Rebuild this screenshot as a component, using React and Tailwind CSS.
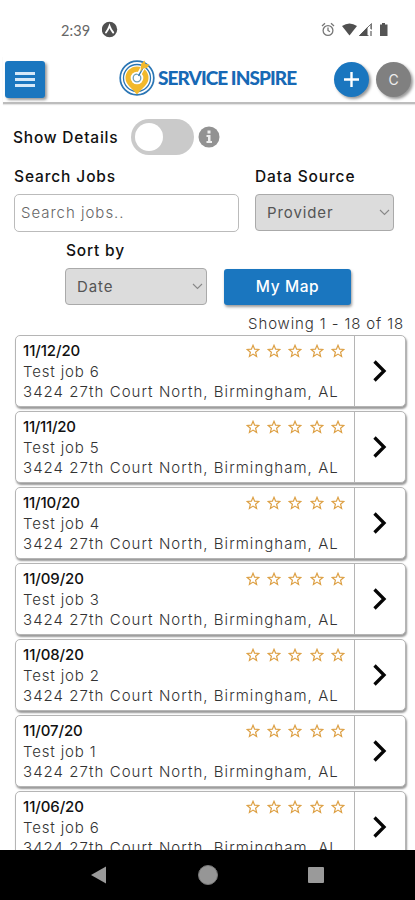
import React from "react";

const jobs = [
  { date: "11/12/20", tracking: "tracking-[-0.1px]", name: "Test job 6" },
  { date: "11/11/20", tracking: "tracking-[-0.3px]", name: "Test job 5" },
  { date: "11/10/20", tracking: "tracking-[-0.2px]", name: "Test job 4" },
  { date: "11/09/20", tracking: "tracking-[-0.1px]", name: "Test job 3" },
  { date: "11/08/20", tracking: "tracking-[-0.1px]", name: "Test job 2" },
  { date: "11/07/20", tracking: "tracking-[-0.1px]", name: "Test job 1" },
  { date: "11/06/20", tracking: "tracking-[-0.1px]", name: "Test job 6" },
];

function StatusBar() {
  return (
    <div className="flex h-[56px] shrink-0 items-start pt-[20px] pl-[61px] pr-[27px] text-[#555]">
      <span className="w-[41px] font-['Lato'] text-[14.500px] leading-[21px] tracking-[0.1px] text-[#666]">2:39</span>
      <svg className="mt-[1px]" width="16" height="17" viewBox="0 0 16 17">
        <circle cx="7.5" cy="8.5" r="7.7" fill="#505050" />
        <path d="M4 11.5 Q6 9 7.5 5 Q9 9 11.2 11.5" fill="none" stroke="#fff" strokeWidth="1.9" strokeLinecap="round" />
      </svg>
      <svg className="ml-auto mt-[1px]" width="70" height="18" viewBox="0 0 70 18">
        <g fill="none" stroke="#777" strokeWidth="1.3">
          <circle cx="10" cy="9.500" r="4.900" />
          <path d="M4 5l3-2.800M16 5l-3-2.800M10 6.500v3l2 1.300" />
        </g>
        <path d="M24 5Q31.500 0 39 5L31.500 14.500Z" fill="#505050" />
        <path d="M53.500 2.500V14.500H41.500Z" fill="none" stroke="#777" strokeWidth="1" />
        <path d="M49.500 6V15H41Z" fill="#505050" />
        <path d="M50.500 8.500h4.500V15h-4.500z" fill="#fff" />
        <path d="M53 3v5M53 10v5" stroke="#777" strokeWidth="1.400" />
        <path d="M62 3.500h2V2h3v1.500h2.500V15H62z" fill="#555" />
      </svg>
    </div>
  );
}

function Logo() {
  return (
    <div className="ml-[74px] flex w-[184px] items-center">
      <svg className="mb-[3px] shrink-0" width="37" height="38" viewBox="0 0 37 38">
        <circle cx="18" cy="19" r="16.800" fill="none" stroke="#2b76b5" strokeWidth="1.700" />
        <circle cx="18" cy="19" r="13.500" fill="none" stroke="#2b76b5" strokeWidth="1.300" />
        <path d="M6.500 19a11.500 11.500 0 1 1 23 0c0 6-5.500 9.500-11.500 16.500-6-7-11.500-10.500-11.500-16.500Z" fill="#f2b92c" />
        <circle cx="18" cy="19" r="6.300" fill="#fff" />
        <circle cx="18" cy="19" r="3.800" fill="#fff" stroke="#6f9fb8" strokeWidth="1.300" />
        <path d="M20 15.500L25.500 5.500" stroke="#fff" strokeWidth="4.500" />
        <path d="M19.500 17L25.500 6" stroke="#2b76b5" strokeWidth="1.400" />
        <path d="M21.500 13L22 5L25.500 1.500L26.500 5L30.500 5.500L28 9L24 9.500Z" fill="#f2b92c" />
      </svg>
      <span className="mb-[3px] ml-[2px] whitespace-nowrap font-['Lato'] text-[19px] leading-[24px] font-black tracking-[-0.93px] text-[#1769b5]">SERVICE INSPIRE</span>
    </div>
  );
}

function Header() {
  return (
    <div className="ml-[3px] flex h-[48px] shrink-0 items-center border-b-2 border-[#bdbdbd] shadow-[0_1px_1px_#e5e5e5]">
      <button className="ml-[2px] flex h-[37px] w-[40px] flex-col items-center justify-center gap-[3px] rounded-[3px] bg-[#1a76bf] shadow-[2px_2px_3px_#999]">
        <span className="h-[3px] w-[20px] bg-[#d5e8f8]" />
        <span className="h-[3px] w-[20px] bg-[#d5e8f8]" />
        <span className="h-[3px] w-[20px] bg-[#d5e8f8]" />
      </button>
      <Logo />
      <button className="ml-[31px] flex size-[35px] shrink-0 items-center justify-center rounded-full bg-[#1a76bf] shadow-[2px_2px_3px_#999]">
        <svg width="17" height="17" viewBox="0 0 17 17"><path d="M8.500 1v15M1 8.500h15" stroke="#fff" strokeWidth="2.400" /></svg>
      </button>
      <button className="ml-[7px] flex size-[35px] shrink-0 items-center justify-center rounded-full bg-[#808080] font-['Inter'] text-[14px] text-[#eee] shadow-[2px_2px_3px_#999]">C</button>
    </div>
  );
}

function Select({ label, width }) {
  return (
    <div className={`${width} flex h-[37px] items-center justify-between rounded-[4px] border border-[#aaa] bg-[#dcdcdc] pl-[11px] pr-[3px] text-[15px] tracking-[0.900px] text-[#555]`}>
      <span className="pt-[2px]">{label}</span>
      <svg width="11" height="7" viewBox="0 0 11 7"><path d="M1 1l4.500 4.500L10 1" fill="none" stroke="#888" strokeWidth="1.100" /></svg>
    </div>
  );
}

function Star() {
  return (
    <svg width="14" height="14" viewBox="0 0 14 14">
      <path d="M7 1.300L8.600 5.200L12.800 5.500L9.600 8.200L10.600 12.400L7 10.100L3.400 12.400L4.400 8.200L1.200 5.500L5.400 5.200Z" fill="none" stroke="#dda044" strokeWidth="1.200" />
    </svg>
  );
}

function JobCard({ job }) {
  return (
    <div className="flex h-[72px] shrink-0 rounded-[5px] border border-[#b5b5b5] bg-white shadow-[1px_2px_2px_#999]">
      <div className="w-[339px] shrink-0 border-r border-[#b5b5b5] pt-[5px] pl-[7px] text-[15px] leading-[20.5px] font-light text-[#333]">
        <div className="flex items-center justify-between pr-[9px]">
          <span className={`font-medium text-[#111] ${job.tracking}`}>{job.date}</span>
          <div className="flex gap-[7.300px]"><Star /><Star /><Star /><Star /><Star /></div>
        </div>
        <div className="tracking-[0.85px]">{job.name}</div>
        <div className="whitespace-nowrap tracking-[1.040px]">3424 27th Court North, Birmingham, AL</div>
      </div>
      <div className="flex flex-1 items-center justify-center">
        <svg width="14" height="22" viewBox="0 0 14 22"><path d="M1.500 1.500L11 11L1.500 20.500" fill="none" stroke="#050505" strokeWidth="3.300" /></svg>
      </div>
    </div>
  );
}

export default function App() {
  return (
    <div className="flex h-[900px] w-[415px] flex-col overflow-hidden bg-white font-['Inter',sans-serif]">
      <StatusBar />
      <Header />
      <main className="flex min-h-0 flex-1 flex-col overflow-hidden">
        <div className="mt-[14px] flex h-[38px] shrink-0 items-center pl-[13px]">
          <span className="w-[118px] whitespace-nowrap pt-[1px] text-[15.500px] font-medium tracking-[0.78px] text-[#111]">Show Details</span>
          <div className="flex h-[36px] w-[63px] items-center rounded-full bg-[#cacaca] pl-[4px]"><div className="size-[28px] rounded-full bg-white" /></div>
          <svg className="ml-[4px]" width="22" height="22" viewBox="0 0 22 22">
            <circle cx="11" cy="11" r="10.500" fill="#929292" />
            <path d="M9.500 4.500h3v3h-3zM8.500 9h4v6h1.500v2h-5.500v-2h1.500v-4h-1.500z" fill="#eee" />
          </svg>
        </div>
        <div className="mt-[10px] flex shrink-0 pl-[14px]">
          <div className="w-[241px]">
            <div className="h-[28px] text-[15.500px] leading-[21px] font-medium tracking-[0.88px] text-[#111]">Search Jobs</div>
            <div className="flex h-[38px] w-[225px] items-center rounded-[5px] border border-[#bbb] pt-[1px] pl-[6px] text-[15px] font-light tracking-[0.98px] text-[#666]">Search jobs..</div>
          </div>
          <div>
            <div className="h-[28px] text-[15.500px] leading-[21px] font-medium tracking-[0.88px] text-[#111]">Data Source</div>
            <Select label="Provider" width="w-[139px]" />
          </div>
        </div>
        <div className="mt-[8px] flex shrink-0 items-end pl-[65px]">
          <div>
            <div className="h-[28px] pl-px text-[15.500px] leading-[21px] font-medium tracking-[0.8px] text-[#111]">Sort by</div>
            <Select label="Date" width="w-[142px]" />
          </div>
          <button className="ml-[17px] h-[36px] w-[127px] rounded-[3px] bg-[#1a76bf] text-[15.500px] font-medium tracking-[0.6px] text-white shadow-[1px_2px_3px_#999]">My Map</button>
        </div>
        <div className="mt-[9px] h-[21px] shrink-0 pr-[11px] text-right text-[15px] leading-[20px] font-light tracking-[0.87px] text-[#333]">Showing 1 - 18 of 18</div>
        <div className="flex min-h-0 flex-1 flex-col gap-[4px] overflow-hidden pl-[15px] pr-[9px]">
          {jobs.map((job) => <JobCard key={job.date} job={job} />)}
        </div>
      </main>
      <nav className="flex h-[50px] shrink-0 items-center bg-black">
        <svg className="ml-[90px]" width="17" height="18" viewBox="0 0 17 18"><path d="M1 9L16 0.500V17.500Z" fill="#9a9a9a" /></svg>
        <div className="ml-[91px] size-[20px] rounded-full border border-[#777] bg-[#969696]" />
        <div className="ml-[90px] size-[16px] rounded-[1px] bg-[#9a9a9a]" />
      </nav>
    </div>
  );
}
